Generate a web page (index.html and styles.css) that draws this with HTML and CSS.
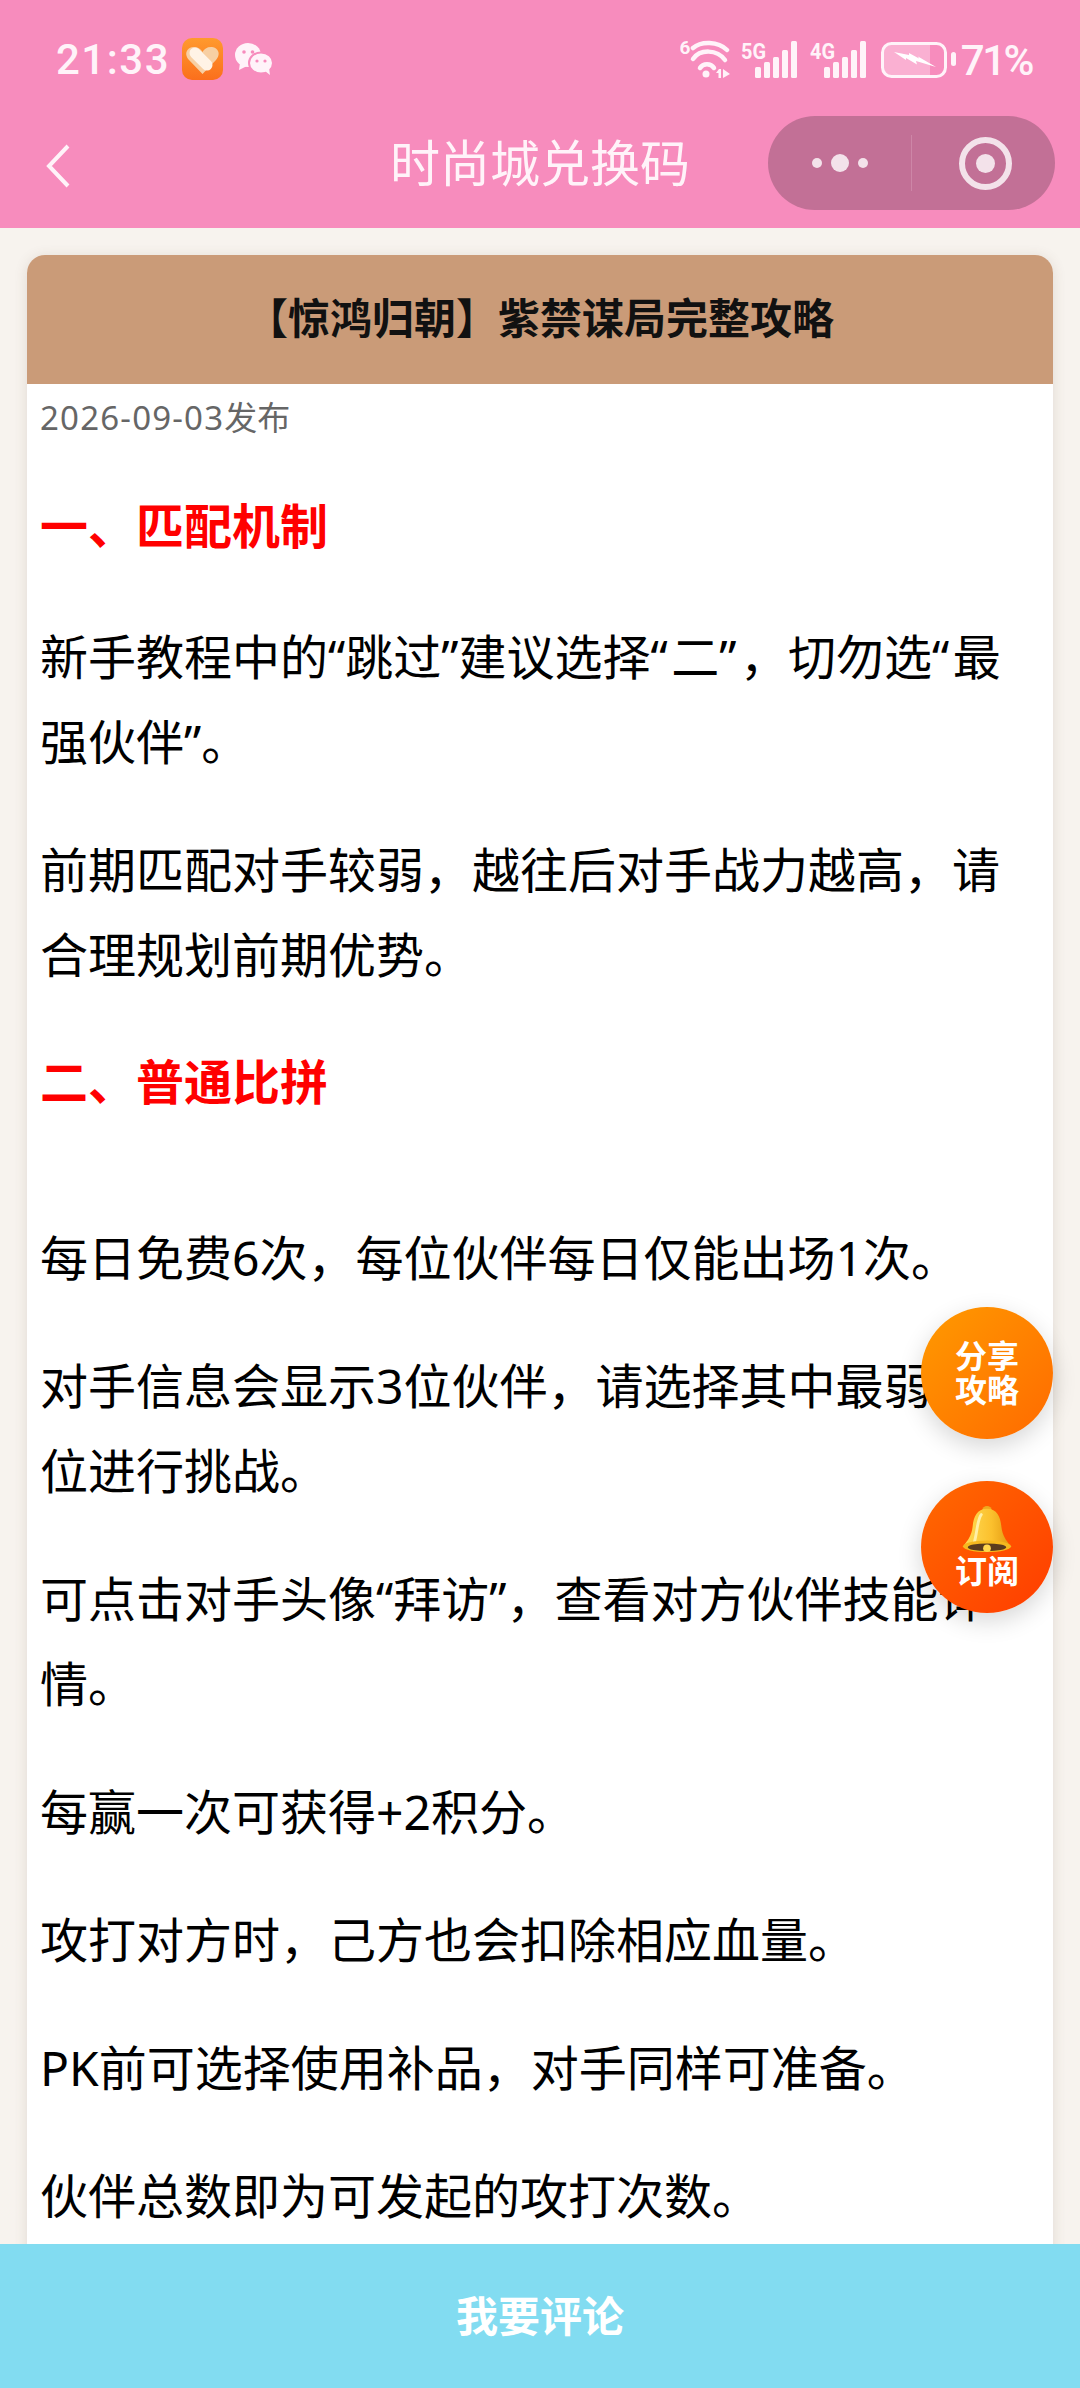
FILE: index.html
```html
<!DOCTYPE html>
<html lang="zh-CN">
<head>
<meta charset="utf-8">
<title>时尚城兑换码</title>
<link rel="stylesheet" href="styles.css">
</head>
<body>
<div class="page">
  <header class="top">
    <div class="status">
      <div class="status-left">
        <span class="time">21:33</span>
        <svg class="app-icon" viewBox="0 0 41 42"><defs><linearGradient id="ag" x1="0" y1="0" x2="0" y2="1"><stop offset="0" stop-color="#ff9a2e"/><stop offset="1" stop-color="#fb6f1c"/></linearGradient></defs><rect width="41" height="42" rx="10" fill="url(#ag)"/><path d="M20.500 36 L7 22 C1 15 6 9 12 9 C16 9 19 11 20.500 14 C22 11 25 9 29 9 C35 9 40 15 34 22 Z" fill="#f7cfa3"/><path d="M13 15 L25 27" stroke="#fff3e6" stroke-width="11" stroke-linecap="round"/></svg>
        <svg class="wechat" viewBox="0 0 38 33"><ellipse cx="13" cy="12" rx="13" ry="12" fill="#fff3f9"/><path d="M5 20 L4 27 L12 23 Z" fill="#fff3f9"/><ellipse cx="26" cy="20" rx="12" ry="10.500" fill="#fff3f9" stroke="#f78cbd" stroke-width="2"/><path d="M30 28 L35 32 L34 25 Z" fill="#fff3f9"/><circle cx="9" cy="9" r="1.800" fill="#f78cbd"/><circle cx="17.500" cy="9" r="1.800" fill="#f78cbd"/><circle cx="22" cy="18" r="1.600" fill="#f78cbd"/><circle cx="30" cy="18" r="1.600" fill="#f78cbd"/></svg>
      </div>
      <div class="status-right">
        <svg class="wifi" viewBox="0 0 50 40"><text x="-0.500" y="14" class="net-small">6</text><g fill="none" stroke="#fff3f9" stroke-width="4.500" stroke-linecap="round"><path d="M13 8 C21 1 38 1 47 10"/><path d="M13 19 C20 9 37 9 45 20"/><path d="M20 28 C23 23 31 23 34 28"/></g><circle cx="26" cy="34" r="3.500" fill="#fff3f9"/><path d="M36 33 L39 29 H41 V38 H38.500 V33 Z M43 29 L50 34 L43 38 Z" fill="#fff3f9"/></svg>
        <svg class="signal" viewBox="0 0 56 40"><text x="0" y="19" class="net-label" textLength="25" lengthAdjust="spacingAndGlyphs">5G</text><g fill="#fff3f9"><rect x="14" y="27" width="6" height="11" rx="1.500"/><rect x="23" y="22" width="6" height="16" rx="1.500"/><rect x="32" y="17" width="6" height="21" rx="1.500"/><rect x="41" y="10" width="6" height="28" rx="1.500"/><rect x="50" y="1" width="6" height="37" rx="1.500"/></g></svg>
        <svg class="signal signal-4g" viewBox="0 0 56 40"><text x="0" y="19" class="net-label" textLength="25" lengthAdjust="spacingAndGlyphs">4G</text><g fill="#fff3f9"><rect x="14" y="27" width="6" height="11" rx="1.500"/><rect x="23" y="22" width="6" height="16" rx="1.500"/><rect x="32" y="17" width="6" height="21" rx="1.500"/><rect x="41" y="10" width="6" height="28" rx="1.500"/><rect x="50" y="1" width="6" height="37" rx="1.500"/></g></svg>
        <svg class="battery" viewBox="0 0 76 40"><path d="M9 4.500H49V35.500H9a7 7 0 0 1-7-7V11.500a7 7 0 0 1 7-7Z" fill="#fff3f9" opacity=".35"/><rect x="1.500" y="3.500" width="63" height="33" rx="9" fill="none" stroke="#fff3f9" stroke-width="3"/><rect x="70" y="12" width="5" height="14" rx="2.500" fill="#fff3f9"/><path d="M13 12 L28 15 L28 13 L38 18.500 L37 16.500 L55 27 L35 21 L36 24.500 L25 18 L25 20 Z" fill="#fff"/></svg>
        <span class="battery-pct">71%</span>
      </div>
    </div>
    <nav class="nav">
      <svg class="back" viewBox="0 0 26 48"><path d="M23 3 L4 23 L23 43" fill="none" stroke="#fff3f9" stroke-width="4"/></svg>
      <h1 class="nav-title">时尚城兑换码</h1>
      <div class="capsule">
        <span class="cap-dots"><i class="dot"></i><i class="dot dot-big"></i><i class="dot"></i></span>
        <i class="cap-line"></i>
        <span class="cap-target"><i class="target-core"></i></span>
      </div>
    </nav>
  </header>

  <main class="card">
    <h2 class="card-title">【惊鸿归朝】紫禁谋局完整攻略</h2>
    <p class="date"><span class="date-num">2026-09-03</span>发布</p>
    <h3 class="section first">一、匹配机制</h3>
    <p class="para">新手教程中的“跳过”建议选择<span class="q">“</span>二<span class="q">”</span>，切勿选<span class="q">“</span>最强伙伴”。</p>
    <p class="para">前期匹配对手较弱，越往后对手战力越高，请合理规划前期优势。</p>
    <h3 class="section">二、普通比拼</h3>
    <p class="para after-gap">每日免费6次，每位伙伴每日仅能出场1次。</p>
    <p class="para">对手信息会显示3位伙伴，请选择其中最弱一位进行挑战。</p>
    <p class="para">可点击对手头像“拜访”，查看对方伙伴技能详情。</p>
    <p class="para">每赢一次可获得+2积分。</p>
    <p class="para">攻打对方时，己方也会扣除相应血量。</p>
    <p class="para">PK前可选择使用补品，对手同样可准备。</p>
    <p class="para">伙伴总数即为可发起的攻打次数。</p>
  </main>

  <button class="fab fab-share">分享<br>攻略</button>
  <button class="fab fab-sub">
    <svg class="bell" viewBox="0 0 52 50"><defs><linearGradient id="bg" x1="0" y1="0" x2="1" y2="0"><stop offset="0" stop-color="#ffdc55"/><stop offset=".6" stop-color="#fbc02d"/><stop offset="1" stop-color="#e39a12"/></linearGradient></defs><circle cx="26" cy="5" r="5" fill="#eea91f"/><path d="M26 3C15 3 12 12 11 22 10 31 6 36 2 41H50C46 36 42 31 41 22 40 12 37 3 26 3Z" fill="url(#bg)"/><path d="M20 9C16 14 16 26 13 37" fill="none" stroke="#fff0a8" stroke-width="3" stroke-linecap="round"/><ellipse cx="26" cy="42" rx="25" ry="6" fill="#f5b91f"/><ellipse cx="26" cy="43" rx="20" ry="4" fill="#5a3c1e"/><circle cx="26" cy="44" r="4" fill="#ffd84d"/></svg>
    <span class="fab-label">订阅</span>
  </button>

  <footer class="comment-bar">我要评论</footer>
</div>
</body>
</html>
```
FILE: styles.css
```css
* { box-sizing: border-box; }
html, body { margin: 0; padding: 0; }
body { font-family: "Noto Sans", "Noto Sans CJK SC", sans-serif; background: #f7f3ee; }
.page { position: relative; width: 1080px; height: 2388px; overflow: hidden; background: #f7f3ee; }

.top { height: 228px; background: #f78cbd; display: flex; flex-direction: column; }
.status { height: 114px; padding: 38px 48px 0 56px; display: flex; justify-content: space-between; align-items: flex-start; color: #fff3f9; }
.status-left { display: flex; align-items: center; height: 42px; font-family: "Roboto", sans-serif; }
.time { font-size: 42px; font-weight: 500; line-height: 42px; letter-spacing: 1.500px; margin-top: 2px; }
.app-icon { width: 41px; height: 42px; margin-left: 12px; }
.wechat { width: 38px; height: 33px; margin-left: 12px; }
.status-right { display: flex; align-items: flex-start; height: 42px; font-family: "Roboto", sans-serif; }
.wifi { width: 50px; height: 40px; margin-top: 2px; }
.signal { width: 56px; height: 40px; margin-left: 11px; margin-top: 2px; }
.signal-4g { margin-left: 13px; }
.battery { width: 76px; height: 40px; margin-left: 15px; margin-top: 2px; }
.battery-pct { font-size: 42px; font-weight: 500; line-height: 42px; letter-spacing: -2.500px; margin-left: 4px; margin-top: 2px; }
.net-label { font: 700 22px "Roboto", sans-serif; fill: #fff3f9; }
.net-small { font: 700 19px "Roboto", sans-serif; fill: #fff3f9; }

.nav { height: 114px; display: grid; grid-template-columns: 1fr auto 1fr; align-items: center; padding: 0 25px; }
.back { width: 26px; height: 48px; margin-left: 20px; margin-top: -8px; }
.nav-title { margin: -16px 0 0; font-size: 50px; font-weight: 400; color: #fff3f9; line-height: 60px; }
.capsule { justify-self: end; width: 287px; height: 94px; margin-top: -16px; border-radius: 47px; background: #c27096; display: flex; align-items: center; }
.cap-dots { width: 143px; display: flex; justify-content: center; align-items: center; gap: 9px; }
.dot { width: 10px; height: 10px; border-radius: 50%; background: #f3e2ea; }
.dot-big { width: 18px; height: 18px; }
.cap-line { width: 1px; height: 56px; background: #cd86a7; }
.cap-target { margin-left: 47px; width: 53px; height: 53px; border-radius: 50%; border: 6px solid #f3e2ea; display: flex; align-items: center; justify-content: center; }
.target-core { width: 19px; height: 19px; border-radius: 50%; background: #f3e2ea; }

.card { margin: 27px 27px 0; height: 2200px; background: #fff; border-radius: 18px 18px 0 0; box-shadow: 0 2px 14px rgba(90, 70, 50, .14); overflow: hidden; }
.card-title { margin: 0; height: 129px; padding-bottom: 8px; background: #ca9b78; display: flex; align-items: center; justify-content: center; font-size: 42px; font-weight: 700; color: #111; }
.date { margin: 0; padding: 0 13px; font-size: 33px; line-height: 68px; color: #666; }
.date-num { letter-spacing: 1.200px; }
.section { margin: 42px 0 0; padding: 0 13px; font-size: 48px; line-height: 85px; font-weight: 700; color: #f00; }
.section.first { margin-top: 31px; }
.para { margin: 43px 0 0; padding: 0 38px 0 13px; font-size: 48px; line-height: 85px; color: #000; }
.q { letter-spacing: 3.500px; }
.section + .para { margin-top: 46px; }
.section + .para.after-gap { margin-top: 91px; }

.fab { position: absolute; left: 921px; width: 132px; height: 132px; border: 0; border-radius: 50%; color: #fff; font-family: inherit; font-size: 32px; line-height: 34px; font-weight: 700; display: flex; flex-direction: column; align-items: center; justify-content: center; padding: 0; box-shadow: 0 8px 24px rgba(0, 0, 0, .16); }
.fab-share { top: 1307px; background: linear-gradient(135deg, #ff9a00, #ff6a00); }
.fab-sub { top: 1481px; background: linear-gradient(135deg, #ff6a00, #ff3c00); }
.bell { width: 50px; height: 50px; margin-bottom: -2px; }
.fab-label { display: block; line-height: 36px; }

.comment-bar { position: absolute; left: 0; right: 0; bottom: 0; height: 144px; padding-bottom: 5px; background: #82dcf1; color: #fff; font-size: 42px; font-weight: 700; display: flex; align-items: center; justify-content: center; }
```
